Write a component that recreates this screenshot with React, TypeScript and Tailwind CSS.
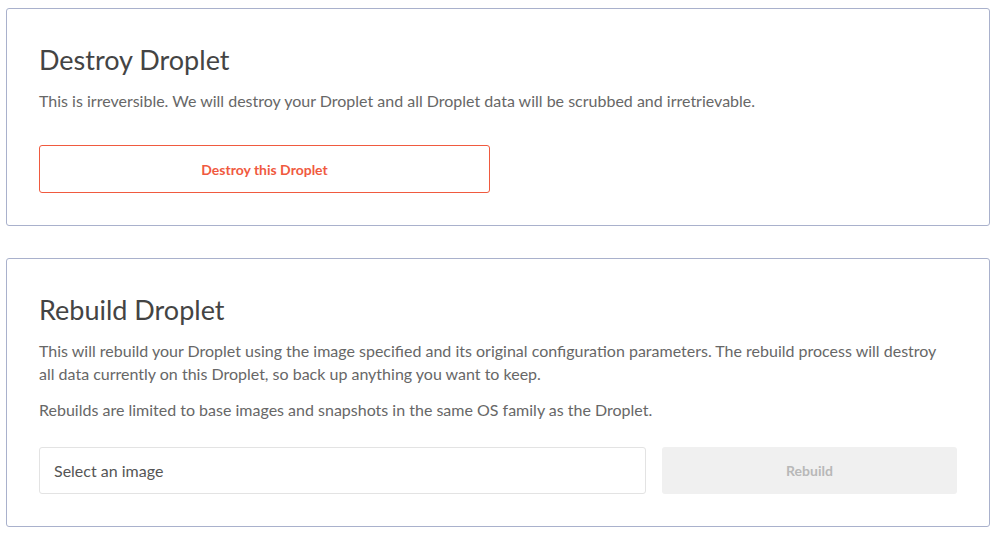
export default function App() {
  return (
    <div className="min-h-screen bg-white pl-[6px] pr-[8px] pt-[8px] font-['Lato',sans-serif] text-[#676767]">
      {/* Destroy */}
      <section className="rounded-[3px] border border-[#a9b1cc] px-[32px] pt-[34px] pb-[32px]">
        <h2 className="text-[27px] leading-[34px] font-normal text-[#444444]">Destroy Droplet</h2>
        <p className="mt-[12px] text-[16px] leading-[23px]">
          This is irreversible. We will destroy your Droplet and all Droplet data will be scrubbed and irretrievable.
        </p>
        <button className="mt-[33px] flex h-[48px] w-[451px] items-center justify-center rounded-[3px] border border-[#f05a3f] bg-white text-[14px] font-bold text-[#f05a3f]">
          Destroy this Droplet
        </button>
      </section>

      {/* Rebuild */}
      <section className="mt-[32px] rounded-[3px] border border-[#a9b1cc] px-[32px] pt-[34px] pb-[32px]">
        <h2 className="text-[27px] leading-[34px] font-normal text-[#444444]">Rebuild Droplet</h2>
        <p className="mt-[12px] max-w-[905px] text-[16px] leading-[23px]">
          This will rebuild your Droplet using the image specified and its original configuration parameters. The rebuild process will destroy all data currently on this Droplet, so back up anything you want to keep.
        </p>
        <p className="mt-[13px] text-[16px] leading-[23px]">
          Rebuilds are limited to base images and snapshots in the same OS family as the Droplet.
        </p>
        <div className="mt-[26px] flex gap-[16px]">
          <div className="flex h-[47px] flex-1 items-center rounded-[3px] border border-[#e3e3e3] px-[14px] text-[16px] text-[#555555]">
            Select an image
          </div>
          <button className="h-[47px] w-[295px] rounded-[3px] bg-[#f0f0f0] text-[14px] font-bold text-[#b8b8b8]">
            Rebuild
          </button>
        </div>
      </section>
    </div>
  );
}
